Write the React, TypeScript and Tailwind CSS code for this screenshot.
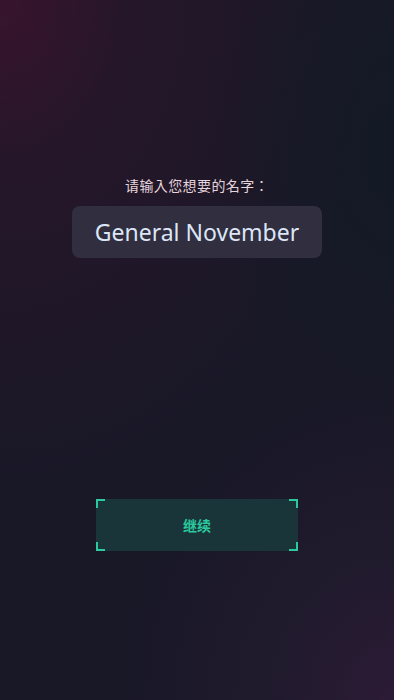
import React from "react";

const Corner = ({ pos }: { pos: string }) => (
  <span className={`pointer-events-none absolute h-[9px] w-[9px] border-[#2cc99e] ${pos}`} />
);

export default function App() {
  return (
    <div
      className="relative flex h-[700px] w-full flex-col items-center overflow-hidden bg-[#191827]"
      style={{ fontFamily: '"Noto Sans", "Noto Sans CJK SC", sans-serif' }}
    >
      {/* background glow */}
      <div className="pointer-events-none absolute inset-0 bg-[radial-gradient(ellipse_95%_70%_at_0%_0%,#38142e_0%,rgba(42,22,42,0.7)_35%,rgba(25,24,39,0)_100%)]" />
      <div className="pointer-events-none absolute inset-0 bg-[radial-gradient(ellipse_70%_45%_at_100%_100%,#2c1b36_0%,rgba(38,28,50,0.55)_45%,rgba(25,24,39,0)_100%)]" />
      <div className="pointer-events-none absolute inset-0 bg-[radial-gradient(ellipse_45%_40%_at_100%_22%,rgba(18,26,36,0.85)_0%,rgba(25,24,39,0)_100%)]" />

      <div className="relative flex flex-col items-center pt-[175px]">
        <p
          className="text-[14px] leading-[20px] tracking-[0.4px] text-[#e6d4dc]"
          style={{ fontFamily: '"Noto Sans CJK TC", "Noto Sans CJK SC", sans-serif' }}
        >
          请输入您想要的名字：
        </p>
        <div className="mt-[11px] flex h-[52px] w-[250px] items-center justify-center rounded-[8px] bg-[#302e3f]">
          <span className="text-[23px] leading-none text-[#dce6f6]">General November</span>
        </div>
      </div>

      <button className="relative mt-[241px] flex h-[52px] w-[202px] items-center justify-center bg-[#19353a] text-[14px] font-bold text-[#2cc99e]">
        <Corner pos="left-0 top-0 border-l-2 border-t-2" />
        <Corner pos="right-0 top-0 border-r-2 border-t-2" />
        <Corner pos="left-0 bottom-0 border-l-2 border-b-2" />
        <Corner pos="right-0 bottom-0 border-r-2 border-b-2" />
        继续
      </button>
    </div>
  );
}
